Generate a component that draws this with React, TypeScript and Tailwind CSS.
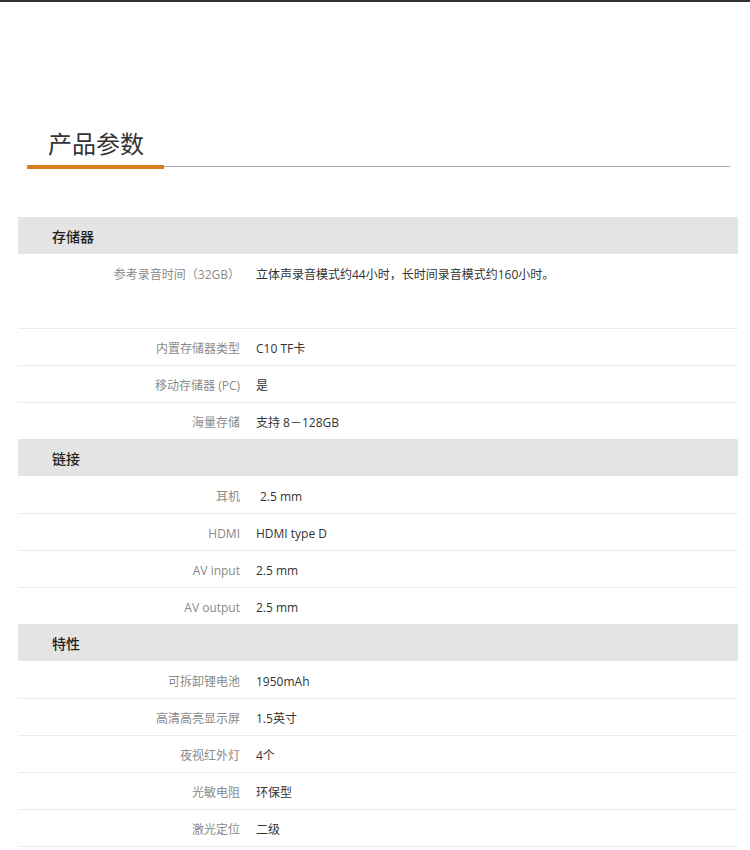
import React from 'react';

type Row = { label: string; value: string; tall?: boolean; indent?: boolean };
type Section = { title: string; rows: Row[] };

const sections: Section[] = [
  {
    title: '存储器',
    rows: [
      { label: '参考录音时间（32GB）', value: '立体声录音模式约44小时，长时间录音模式约160小时。', tall: true },
      { label: '内置存储器类型', value: 'C10 TF卡' },
      { label: '移动存储器 (PC)', value: '是' },
      { label: '海量存储', value: '支持 8－128GB' },
    ],
  },
  {
    title: '链接',
    rows: [
      { label: '耳机', value: '2.5 mm', indent: true },
      { label: 'HDMI', value: 'HDMI type D' },
      { label: 'AV input', value: '2.5 mm' },
      { label: 'AV output', value: '2.5 mm' },
    ],
  },
  {
    title: '特性',
    rows: [
      { label: '可拆卸锂电池', value: '1950mAh' },
      { label: '高清高亮显示屏', value: '1.5英寸' },
      { label: '夜视红外灯', value: '4个' },
      { label: '光敏电阻', value: '环保型' },
      { label: '激光定位', value: '二级' },
    ],
  },
];

const SpecRow: React.FC<{ row: Row; first: boolean }> = ({ row, first }) => (
  <div
    className={`flex text-[12px] leading-[18px] ${first ? '' : 'border-t border-[#ebebeb]'} ${
      row.tall ? 'h-[74px] items-start pt-[12px]' : 'h-[37px] items-center pt-[4px]'
    }`}
  >
    <div className="w-[222px] shrink-0 text-right text-[#8a8a8a]">{row.label}</div>
    <div className={`text-[#333] ${row.indent ? 'ml-[20px]' : 'ml-[16px]'}`}>{row.value}</div>
  </div>
);

export default function App() {
  return (
    <div
      className="w-[750px] h-[850px] bg-white overflow-hidden"
      style={{ fontFamily: '"Open Sans", "Noto Sans CJK SC", sans-serif' }}
    >
      <div className="h-[2px] bg-[#333]" />

      <div className="pt-[127px] pl-[48px] text-[24px] leading-[30px] text-[#333]">产品参数</div>

      <div className="flex items-start pl-[27px] pr-[20px] mt-[6px]">
        <div className="w-[137px] h-[4px] bg-[#dd7a1e]" />
        <div className="flex-1 h-px mt-[1px] bg-[#acacac]" />
      </div>

      <div className="ml-[18px] mr-[12px] mt-[48px]">
        {sections.map((s) => (
          <div key={s.title}>
            <div className="h-[37px] flex items-center pl-[34px] pt-[2px] bg-[#e5e4e4] text-[14px] font-medium text-[#222]">
              {s.title}
            </div>
            {s.rows.map((r, i) => (
              <SpecRow key={r.label} row={r} first={i === 0} />
            ))}
          </div>
        ))}
        <div className="border-t border-[#ebebeb]" />
      </div>
    </div>
  );
}
